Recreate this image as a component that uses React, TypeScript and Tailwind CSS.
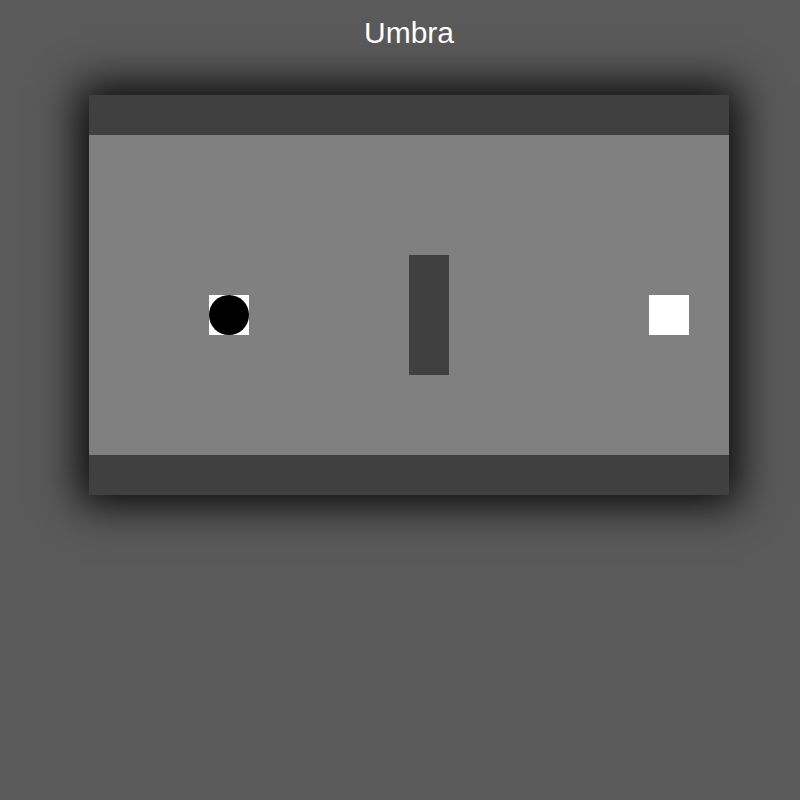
const COLS = 16;
const ROWS = 10;

type Cell = 'edge' | 'floor' | 'wall' | 'player' | 'goal';

function cellAt(r: number, c: number): Cell {
  if (r === 0 || r === ROWS - 1) return 'edge';
  if (c === 8 && r >= 4 && r <= 6) return 'wall';
  if (r === 5 && c === 3) return 'player';
  if (r === 5 && c === 14) return 'goal';
  return 'floor';
}

const CELL_CLASS: Record<Cell, string> = {
  edge: 'bg-[#404040]',
  floor: 'bg-[#808080]',
  wall: 'bg-[#404040]',
  player: 'bg-white',
  goal: 'bg-white',
};

export default function App() {
  const cells = [];
  for (let r = 0; r < ROWS; r++) {
    for (let c = 0; c < COLS; c++) {
      const kind = cellAt(r, c);
      cells.push(
        <div key={`${r}-${c}`} className={`w-10 h-10 ${CELL_CLASS[kind]}`}>
          {kind === 'player' && <div className="w-10 h-10 rounded-full bg-black" />}
        </div>
      );
    }
  }

  return (
    <div
      className="min-h-screen w-full bg-[#5a5a5a] flex flex-col items-center pl-[18px] pt-[16px]"
      style={{ fontFamily: '"Liberation Sans", Arial, sans-serif' }}
    >
      <h1 className="text-[30px] leading-[34px] text-white font-normal">Umbra</h1>

      {/* Board */}
      <div className="mt-[45px] grid grid-cols-16 w-[640px] shadow-[0_0_40px_10px_rgba(0,0,0,0.9)]">
        {cells}
      </div>
    </div>
  );
}
